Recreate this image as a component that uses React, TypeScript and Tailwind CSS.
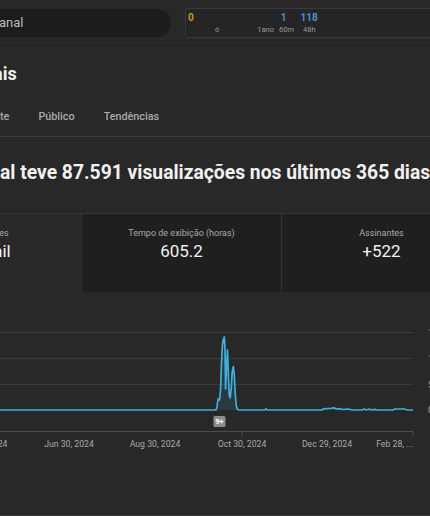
import React from "react";

const LINE_POINTS: [number, number][] = [
  [-5, 409], [216, 409], [217, 406], [218, 398], [219.5, 399], [220.5, 390],
  [221.5, 362], [222.5, 343], [223.5, 338], [224.3, 336], [225, 348], [225.6, 388],
  [226.3, 370], [227.5, 349], [228.3, 372], [229.2, 394], [230.2, 397], [231.2, 388],
  [232.2, 371], [233.3, 365.5], [234.3, 374], [235.3, 394], [236.3, 405], [237.5, 408.5],
  [240, 409], [265, 409], [266, 407.8], [267.5, 409], [322, 409], [323.5, 407.8],
  [327, 407.6], [331, 407.4], [334, 406.8], [336, 408], [339, 407.6], [343, 408.5],
  [348, 408], [352, 409], [362, 409], [364, 408], [366, 409], [370, 408.2],
  [372, 409], [375, 408.4], [377, 409], [393, 409], [395, 408], [404, 408],
  [407, 408.8], [413, 409],
];

const X_LABELS = [
  { x: -17, label: "Apr 30, 2024", anchor: "middle" },
  { x: 69, label: "Jun 30, 2024", anchor: "middle" },
  { x: 155, label: "Aug 30, 2024", anchor: "middle" },
  { x: 242, label: "Oct 30, 2024", anchor: "middle" },
  { x: 327, label: "Dec 29, 2024", anchor: "middle" },
  { x: 413, label: "Feb 28, ...", anchor: "end" },
];

const CARDS = [
  { label: "Visualizações", value: "87,6 mil", active: true },
  { label: "Tempo de exibição (horas)", value: "605.2" },
  { label: "Assinantes", value: "+522" },
];

function ViewsChart() {
  const top = 300;
  const line = LINE_POINTS.map(([x, y], i) => `${i ? "L" : "M"}${x} ${y - top}`).join(" ");
  const spike = LINE_POINTS.filter(([x]) => x >= 216 && x <= 240);
  const area =
    spike.map(([x, y], i) => `${i ? "L" : "M"}${x} ${y - top}`).join(" ") + ` L240 109 L216 109 Z`;

  return (
    <svg width="430" height="160" viewBox="0 0 430 160" className="block">
      {[31.5, 57.5, 83.5].map((y) => (
        <line key={y} x1="0" x2="413" y1={y} y2={y} stroke="#3a3a3a" strokeWidth="1" />
      ))}
      {["1", "1", "5", "0"].map((t, i) => (
        <text key={i} x="428" y={[35, 61, 87, 112][i]} fontSize="9.5" fill="#aaaaaa">
          {t}
        </text>
      ))}
      <path d={area} fill="rgba(65,180,217,0.13)" />
      <path d={line} fill="none" stroke="#3fb0dc" strokeWidth="1.7" strokeLinejoin="round" />
      <line x1="0" x2="413" y1="130.5" y2="130.5" stroke="#4d4d4d" strokeWidth="1" />
      <line x1="242" x2="242" y1="130.5" y2="135" stroke="#4d4d4d" strokeWidth="1" />
      <line x1="413" x2="413" y1="130.5" y2="135" stroke="#4d4d4d" strokeWidth="1" />
      <rect x="213.5" y="115" width="12" height="11" rx="1.5" fill="#8c8c8c" />
      <text x="219.5" y="123.3" fontSize="7.5" fontWeight="700" fill="#ffffff" textAnchor="middle">
        9+
      </text>
      {X_LABELS.map((l) => (
        <text
          key={l.label}
          x={l.x}
          y="145.5"
          fontSize="8.7"
          fill="#aaaaaa"
          textAnchor={l.anchor as "middle" | "end"}
        >
          {l.label}
        </text>
      ))}
    </svg>
  );
}

export default function App() {
  return (
    <div
      className="flex h-[516px] w-[430px] flex-col overflow-hidden bg-[#282828] text-[#f1f1f1]"
      style={{ fontFamily: "Roboto, 'Noto Sans', sans-serif" }}
    >
      {/* Header */}
      <div className="flex h-[46px] shrink-0 items-center border-b border-[#222222] bg-[#282828]">
        <div className="flex h-[28px] w-[171px] shrink-0 items-center rounded-r-full bg-[#1c1c1c]">
          <span className="ml-[-1px] text-[13px] text-[#bcbcbc]">anal</span>
        </div>
        <div className="ml-[14px] flex h-[30px] w-[300px] shrink-0 flex-col rounded-[2px] border border-[#383838] bg-[#252525] pt-[3px]">
          <div className="flex h-[12px] items-center text-[10px] font-bold leading-none">
            <span className="ml-[2px] text-[#c9981c]">0</span>
            <span className="ml-[87px] text-[#4a8fd6]">1</span>
            <span className="ml-[14px] text-[#4a8fd6]">118</span>
          </div>
          <div className="mt-[1px] flex h-[10px] items-center text-[7.5px] leading-none text-[#9a9a9a]">
            <span className="ml-[29px]">ó</span>
            <span className="ml-[38px]">1ano</span>
            <span className="ml-[5px]">60m</span>
            <span className="ml-[9px]">48h</span>
          </div>
        </div>
      </div>

      {/* Title */}
      <div className="mt-[16px] h-[24px] whitespace-nowrap text-[18px] font-bold leading-[24px]">
        <span className="ml-[-7px]">ais</span>
      </div>

      {/* Tabs */}
      <div className="mt-[13px] flex h-[38px] items-center gap-[29px] border-b border-[#3a3a3a] text-[10.8px] font-medium text-[#aaaaaa]">
        <span>te</span>
        <span>Público</span>
        <span>Tendências</span>
      </div>

      {/* Headline */}
      <div className="mt-[22px] h-[28px] whitespace-nowrap text-[19.3px] font-bold leading-[28px]">
        al teve 87.591 visualizações nos últimos 365 dias
      </div>

      {/* Metric cards */}
      <div className="mt-[26px] ml-[-119px] flex h-[79px] shrink-0 border-t border-[#353535]">
        {CARDS.map((c, i) => (
          <div
            key={c.label}
            className={`flex w-[200px] shrink-0 flex-col items-center pt-[13px] ${
              c.active ? "bg-[#282828]" : "bg-[#1f1f1f]"
            } ${i > 0 ? "border-l border-[#333333]" : ""}`}
          >
            <span className="whitespace-nowrap text-[9px] leading-[12px] text-[#aaaaaa]">{c.label}</span>
            <span className="mt-[2px] whitespace-nowrap text-[17px] leading-[20px] text-[#f1f1f1]">{c.value}</span>
          </div>
        ))}
      </div>

      {/* Chart */}
      <div className="mt-[9px]">
        <ViewsChart />
      </div>

      <div className="flex-1" />
      <div className="h-[1px] shrink-0 bg-[#3a3a3a]" />
    </div>
  );
}
